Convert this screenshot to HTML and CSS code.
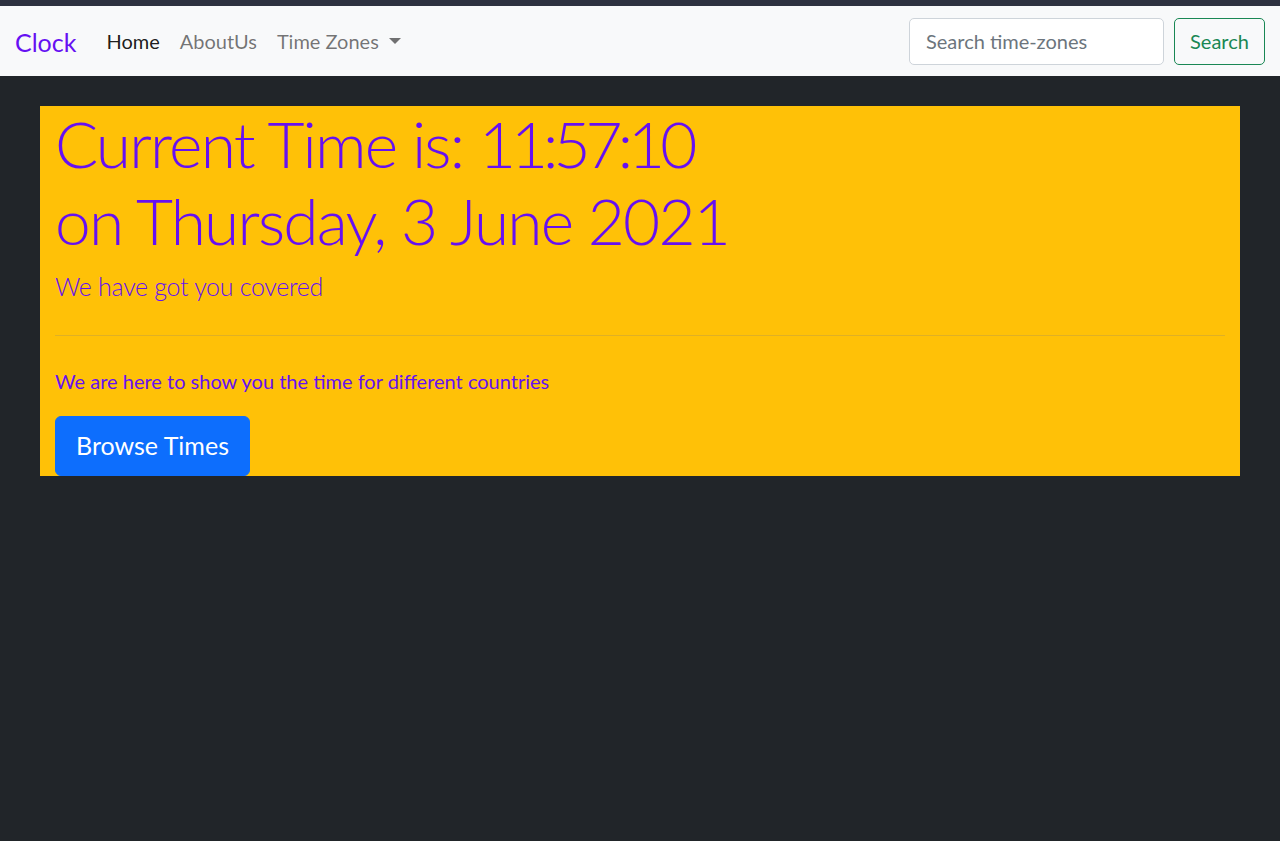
FILE: index.html
```html
<!DOCTYPE html>
<html lang="en">
<head>
<meta charset="utf-8">
<title>Clock</title>
<link rel="stylesheet" href="styles.css">
</head>
<body>
<div class="topstrip"></div>
<nav class="navbar">
  <a class="brand" href="#">Clock</a>
  <ul class="nav">
    <li><a class="nav-link active" href="#">Home</a></li>
    <li><a class="nav-link" href="#">AboutUs</a></li>
    <li><a class="nav-link dropdown-toggle" href="#">Time Zones</a></li>
  </ul>
  <form class="search">
    <input class="search-input" type="search" placeholder="Search time-zones">
    <button class="search-btn" type="button">Search</button>
  </form>
</nav>
<main class="main">
  <section class="hero">
    <h1 class="display">Current Time is: <span class="clock-value">11:57:10</span><br>on Thursday, 3 June 2021</h1>
    <p class="lead">We have got you covered</p>
    <hr class="divider">
    <p class="text">We are here to show you the time for different countries</p>
    <a class="btn-browse" href="#">Browse Times</a>
  </section>
</main>
</body>
</html>
```
FILE: styles.css
```css
html, body {
  margin: 0;
  padding: 0;
}
body {
  background: #212529;
  font-family: Lato, "Open Sans", sans-serif;
  font-size: 20px;
  line-height: 1.5;
  min-height: 841px;
}
.topstrip {
  height: 6px;
  background: #2d3140;
}
.navbar {
  height: 70px;
  box-sizing: border-box;
  background: #f8f9fa;
  display: flex;
  align-items: center;
  padding: 10px 15px;
}
.brand {
  color: #6610f2;
  font-size: 25px;
  text-decoration: none;
  margin-right: 20px;
  line-height: 1.5;
  padding-top: 3px;
}
.nav {
  display: flex;
  list-style: none;
  margin: 0;
  padding: 0;
  flex: 1;
}
.nav-link {
  display: block;
  padding: 10px;
  color: rgba(0,0,0,.55);
  text-decoration: none;
}
.nav-link.active {
  color: rgba(0,0,0,.9);
}
.dropdown-toggle::after {
  content: "";
  display: inline-block;
  margin-left: 10px;
  vertical-align: 5px;
  border-top: 6px solid;
  border-left: 6px solid transparent;
  border-right: 6px solid transparent;
}
.search {
  display: flex;
  gap: 10px;
  margin: 0;
}
.search-input {
  width: 255px;
  height: 47px;
  box-sizing: border-box;
  padding: 7px 16px;
  border: 1px solid #ced4da;
  border-radius: 5px;
  font: inherit;
  font-size: 20px;
  color: #212529;
  background: #fff;
}
.search-input::placeholder {
  color: #6c757d;
}
.search-btn {
  width: 91px;
  height: 47px;
  box-sizing: border-box;
  padding: 7px 0;
  border: 1px solid #198754;
  border-radius: 5px;
  background: transparent;
  color: #198754;
  font: inherit;
  font-size: 20px;
  text-align: center;
}
.main {
  padding: 30px 40px 0;
}
.hero {
  background: #ffc107;
  padding: 0 15px;
  color: #6610f2;
}
.display {
  margin: 0 0 8px;
  font-size: 64px;
  font-weight: 300;
  line-height: 1.2;
  letter-spacing: -1.8px;
}
.clock-value {
  letter-spacing: -5px;
}
.lead {
  margin: 0;
  font-size: 25px;
  font-weight: 300;
  line-height: 1.5;
  letter-spacing: -0.3px;
}
.divider {
  margin: 30px 0;
  border: 0;
  border-top: 1px solid currentColor;
  opacity: .25;
}
.text {
  margin: 0 0 20px;
  font-size: 20px;
}
.btn-browse {
  display: inline-block;
  background: #0d6efd;
  color: #fff;
  text-decoration: none;
  font-size: 25px;
  line-height: 1.5;
  padding: 10px 20px;
  border: 1px solid #0d6efd;
  border-radius: 6px;
  vertical-align: top;
}
```
